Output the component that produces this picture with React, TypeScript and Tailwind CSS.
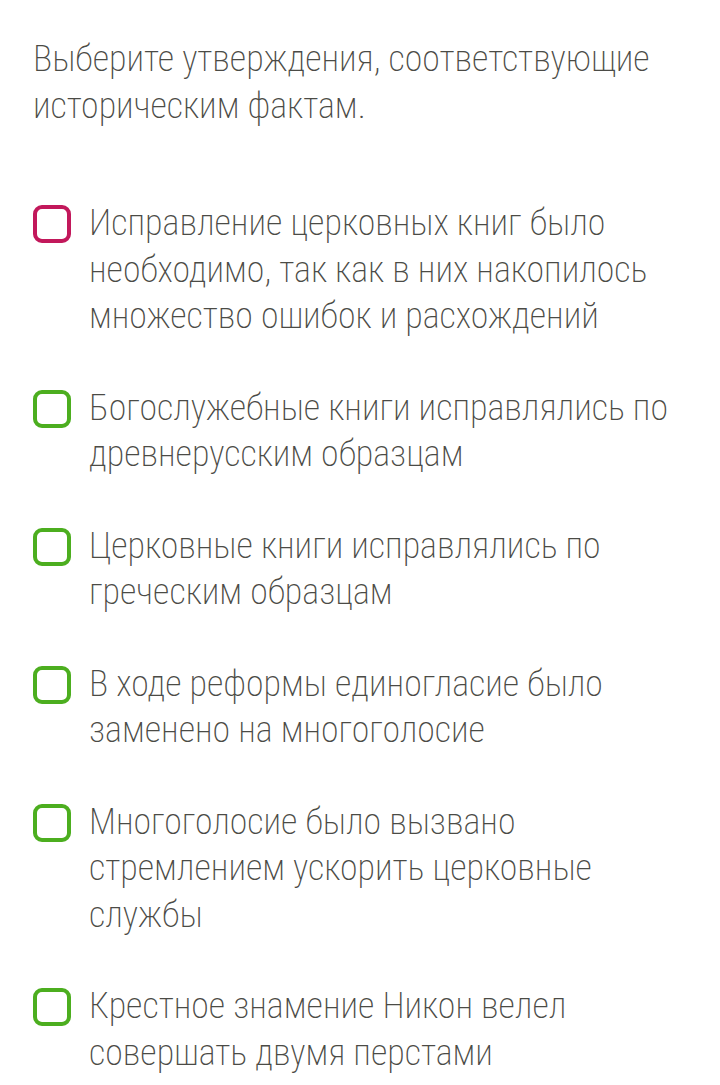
const items = [
  { text: "Исправление церковных книг было необходимо, так как в них накопилось множество ошибок и расхождений", active: true },
  { text: "Богослужебные книги исправлялись по древнерусским образцам", active: false },
  { text: "Церковные книги исправлялись по греческим образцам", active: false },
  { text: "В ходе реформы единогласие было заменено на многоголосие", active: false },
  { text: "Многоголосие было вызвано стремлением ускорить церковные службы", active: false },
  { text: "Крестное знамение Никон велел совершать двумя перстами", active: false },
];

export default function App() {
  return (
    <div className="min-h-[1085px] bg-white pl-[33px] pr-[30px] pt-[36px] text-[#4b4b46] font-['Roboto_Condensed',Roboto,sans-serif] font-[250] [font-stretch:condensed]">
      <p className="text-[36px] leading-[47px]">
        Выберите утверждения, соответствующие историческим фактам.
      </p>
      <div className="mt-[70px] flex flex-col gap-[45px]">
        {items.map((item, i) => (
          <div key={i} className="flex items-start gap-[18px]">
            <div
              className={`mt-[5px] h-[38px] w-[38px] shrink-0 rounded-[9px] border-[4px] ${
                item.active ? "border-[#c2185b]" : "border-[#4cae1f]"
              }`}
            ></div>
            <p className="text-[36px] leading-[46.5px]">{item.text}</p>
          </div>
        ))}
      </div>
    </div>
  );
}
